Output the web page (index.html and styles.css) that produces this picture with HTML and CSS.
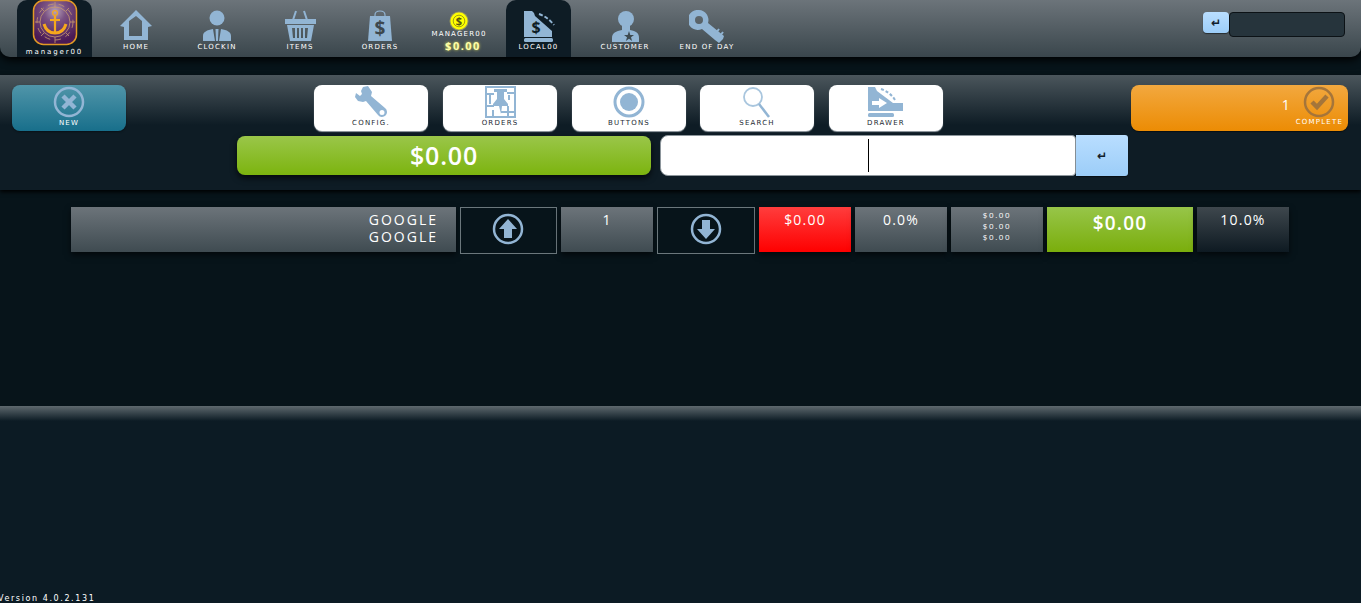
FILE: index.html
```html
<!DOCTYPE html>
<html lang="en">
<head>
    <meta charset="UTF-8">
    <title>POS</title>
    <link rel="stylesheet" href="styles.css">
</head>
<body>

    <!-- Top navigation -->
    <header class="topbar">
        <div class="nav-item tab logo-tab">
            <svg class="logo" width="46" height="46" viewBox="0 0 46 46">
                <defs>
                    <radialGradient id="logoBg" cx="50%" cy="25%" r="70%">
                        <stop offset="0" stop-color="#b8a3b9"/>
                        <stop offset="0.35" stop-color="#7a5283"/>
                        <stop offset="1" stop-color="#4a1a55"/>
                    </radialGradient>
                </defs>
                <rect x="1.500" y="0.500" width="43" height="44" rx="10" fill="url(#logoBg)" stroke="#e39a25" stroke-width="1.500"/>
                <g fill="none" stroke="#c99a70" stroke-width="0.800">
                    <circle cx="23" cy="22" r="15"/>
                    <circle cx="23" cy="22" r="18" stroke-dasharray="6 5"/>
                    <path d="M23 2V8M23 37V43M3 22H8M38 22H43M9 8L12 11M37 8L34 11M9 36L12 33M37 36L34 33"/>
                </g>
                <g fill="none" stroke="#f5a81c" stroke-width="2.200">
                    <circle cx="23" cy="13" r="2.400" stroke-width="1.200"/>
                    <path d="M23 16V33M18 20H28"/>
                    <path d="M12 24C14 31 19 33 23 33C27 33 32 31 34 24" stroke-width="3"/>
                </g>
            </svg>
            <span class="logo-name">manager00</span>
        </div>

        <div class="nav-item nav-home">
            <svg width="32" height="30" viewBox="0 0 32 30"><path fill="#92b5d4" fill-rule="evenodd" d="M16 0L32 16L28 17V30H4V17L0 16L4 12ZM9 11V26H22V11L16 6Z"/></svg>
            <span class="nav-label">HOME</span>
        </div>
        <div class="nav-item nav-clock">
            <svg width="28" height="31" viewBox="0 0 28 31"><circle cx="14" cy="8" r="7.500" fill="#92b5d4"/><path fill="#92b5d4" d="M0 31V26C0 22 4 20 10 19L12 31ZM28 31V26C28 22 24 20 18 19L16 31ZM12.500 19H15.500L15 31H13Z"/></svg>
            <span class="nav-label">CLOCKIN</span>
        </div>
        <div class="nav-item nav-items">
            <svg width="32" height="31" viewBox="0 0 32 31"><path fill="none" stroke="#92b5d4" stroke-width="2" d="M9 10L12 1M23 10L20 1"/><path fill="#92b5d4" d="M1 9H32V14H1Z"/><path fill="#92b5d4" fill-rule="evenodd" d="M3 15H30L27 31H6ZM8 18L9 28H11V18ZM13 18V28H15V18ZM17 18V28H19V18ZM21 18V28H23L24 18Z"/></svg>
            <span class="nav-label">ITEMS</span>
        </div>
        <div class="nav-item nav-orders">
            <svg width="26" height="31" viewBox="0 0 26 31"><path fill="none" stroke="#92b5d4" stroke-width="1.200" d="M8 8V5C8 2 10 1 13 1C16 1 18 2 18 5V8"/><path fill="#92b5d4" d="M3 6H23L25 31H1Z"/><text class="bag-sign" x="13" y="25">$</text></svg>
            <span class="nav-label">ORDERS</span>
        </div>
        <div class="nav-item nav-manager">
            <svg width="20" height="20" viewBox="0 0 20 20"><circle cx="10" cy="10" r="9.500" fill="#9a9a5a"/><circle cx="10" cy="10" r="8.500" fill="#ffff00"/><circle cx="10" cy="10" r="5.800" fill="none" stroke="#77771d" stroke-width="0.700"/><text class="coin-sign" x="10" y="14">$</text></svg>
            <span class="nav-label manager-name">MANAGER00</span>
            <span class="manager-cash">$0.00</span>
        </div>
        <div class="nav-item tab local-tab">
            <svg width="32" height="33" viewBox="0 0 32 33"><path fill="#92b5d4" d="M1 1H9L11 3L12 6L29 21V27H1Z"/><rect x="1" y="28" width="29" height="4" rx="1.500" fill="#92b5d4"/><path fill="none" stroke="#92b5d4" stroke-width="2" stroke-dasharray="4 2" d="M16 4C22 6 27 10 31 15"/><text class="bag-sign dark-sign" x="13" y="23">$</text></svg>
            <span class="nav-label">LOCAL00</span>
        </div>
        <div class="nav-item nav-customer">
            <svg width="27" height="32" viewBox="0 0 27 32"><circle cx="14" cy="9" r="8" fill="#92b5d4"/><path fill="#92b5d4" d="M10 15H18V20C24 21 27 23 27 28V32H0V28C0 23 4 21 10 20Z"/><path fill="#3e4a50" d="M17 21L18.300 25H22L19 27.200L20.100 31L17 28.700L13.900 31L15 27.200L12 25H15.700Z"/></svg>
            <span class="nav-label">CUSTOMER</span>
        </div>
        <div class="nav-item nav-key">
            <svg width="36" height="33" viewBox="0 0 36 33"><path fill="#92b5d4" fill-rule="evenodd" d="M10 0A10 10 0 0 1 19 13L35 26L34 29L30 33L26 30L13 19A10 10 0 1 1 10 0ZM10 6A4 4 0 1 0 10 14A4 4 0 1 0 10 6Z"/><path stroke="#92b5d4" stroke-width="2" d="M27 23L30 19M31 26L34 22"/></svg>
            <span class="nav-label">END OF DAY</span>
        </div>

        <div class="quick-entry">
            <button class="enter-btn small">↵</button>
            <div class="quick-input"></div>
        </div>
    </header>

    <!-- Action panel -->
    <section class="panel">
        <div class="action-row">
            <button class="action-btn new-btn">
                <svg width="32" height="32" viewBox="0 0 32 32"><circle cx="16" cy="16" r="14" fill="none" stroke="#92b5d4" stroke-width="2.500"/><path stroke="#92b5d4" stroke-width="4.500" d="M10 10L22 22M22 10L10 22"/></svg>
                <span class="action-label">NEW</span>
            </button>
            <div class="tools">
                <button class="action-btn tool-btn">
                    <svg width="32" height="32" viewBox="0 0 32 32"><path fill="#92b5d4" fill-rule="evenodd" d="M13 0L8 1L6 5L7 8L5 10L1 7L0 11L3 15L8 16L11 15L23 29A5 5 0 1 0 30 22L16 10L17 6ZM27 24A2.500 2.500 0 1 1 27 29A2.500 2.500 0 1 1 27 24Z"/></svg>
                    <span class="action-label">CONFIG.</span>
                </button>
                <button class="action-btn tool-btn">
                    <svg width="31" height="32" viewBox="0 0 31 32"><rect x="1" y="1" width="29" height="30" fill="none" stroke="#92b5d4" stroke-width="2"/><path fill="none" stroke="#92b5d4" stroke-width="2" d="M1 8H9M22 7H30M5 8V18M2 20H9M23 20V30M16 26H30M8 24V31M24 9V14"/><path fill="#92b5d4" d="M9 3H22V6H19V13L23 18V20H17L16 28L14 20H8V18L12 13V6H9Z"/></svg>
                    <span class="action-label">ORDERS</span>
                </button>
                <button class="action-btn tool-btn">
                    <svg width="32" height="32" viewBox="0 0 32 32"><circle cx="16" cy="16" r="14" fill="none" stroke="#92b5d4" stroke-width="3"/><circle cx="16" cy="16" r="9" fill="#92b5d4"/></svg>
                    <span class="action-label">BUTTONS</span>
                </button>
                <button class="action-btn tool-btn">
                    <svg width="32" height="32" viewBox="0 0 32 32"><circle cx="12" cy="11" r="9" fill="none" stroke="#a9c6de" stroke-width="1.800"/><path stroke="#92b5d4" stroke-width="2.500" d="M18 18L28 31"/></svg>
                    <span class="action-label">SEARCH</span>
                </button>
                <button class="action-btn tool-btn">
                    <svg width="38" height="32" viewBox="0 0 38 32"><path fill="#92b5d4" d="M1 1H8L10 5L26 17H36V25H1Z"/><rect x="1" y="27" width="26" height="4" rx="1.500" fill="#92b5d4"/><path fill="none" stroke="#92b5d4" stroke-width="2" stroke-dasharray="3 2" d="M14 3C20 5 25 9 28 14"/><path fill="#fff" d="M5 15H12V12L20 17L12 22V19H5Z"/></svg>
                    <span class="action-label">DRAWER</span>
                </button>
            </div>
            <button class="action-btn complete-btn">
                <span class="complete-count">1</span>
                <span class="complete-side">
                    <svg width="32" height="32" viewBox="0 0 32 32"><circle cx="16" cy="16" r="14" fill="none" stroke="#a5753a" stroke-width="2.500"/><path fill="none" stroke="#a5753a" stroke-width="4.500" d="M9 16L14 21L24 10"/></svg>
                    <span class="action-label complete-label">COMPLETE</span>
                </span>
            </button>
        </div>
        <div class="amount-row">
            <div class="amount">$0.00</div>
            <div class="amount-input"><span class="caret"></span></div>
            <button class="enter-btn">↵</button>
        </div>
    </section>

    <!-- Order lines -->
    <main class="lines">
        <div class="line">
            <div class="cell name">GOOGLE<br>GOOGLE</div>
            <div class="cell stepper">
                <svg width="32" height="32" viewBox="0 0 32 32"><circle cx="16" cy="16" r="14" fill="none" stroke="#92b5d4" stroke-width="2.500"/><path fill="#92b5d4" d="M16 6L25 16H20V25H12V16H7Z"/></svg>
            </div>
            <div class="cell qty">1</div>
            <div class="cell stepper">
                <svg width="32" height="32" viewBox="0 0 32 32"><circle cx="16" cy="16" r="14" fill="none" stroke="#92b5d4" stroke-width="2.500"/><path fill="#92b5d4" d="M16 26L25 16H20V7H12V16H7Z"/></svg>
            </div>
            <div class="cell price red">$0.00</div>
            <div class="cell price">0.0%</div>
            <div class="cell taxes">$0.00<br>$0.00<br>$0.00</div>
            <div class="cell line-total">$0.00</div>
            <div class="cell price dark">10.0%</div>
        </div>
    </main>

    <footer class="bottom">
        <div class="version">Version 4.0.2.131</div>
    </footer>

</body>
</html>
```

FILE: styles.css
```css
* {
    box-sizing: border-box;
}

body {
    font-family: "Open Sans", sans-serif;
    margin: 0;
    height: 100vh;
    overflow: hidden;
    display: flex;
    flex-direction: column;
    background-color: #07141a;
    color: white;
}

button {
    font-family: inherit;
    border: none;
    padding: 0;
    color: inherit;
}

/* Top navigation */
.topbar {
    height: 57px;
    flex: none;
    display: flex;
    padding-left: 17px;
    background: linear-gradient(#6c747a, #3a464c);
    border-radius: 0 0 10px 10px;
    box-shadow: 0 3px 8px #000;
}

.nav-item {
    display: flex;
    flex-direction: column;
    align-items: center;
    padding: 10px 0 5px;
}

.nav-item svg {
    flex: none;
}

.nav-label {
    font-family: "DejaVu Sans", sans-serif;
    font-size: 7px;
    line-height: 9px;
    margin-top: auto;
    letter-spacing: 1.200px;
    white-space: nowrap;
}

.tab {
    background-color: #0e1c25;
    border-radius: 10px 10px 0 0;
}

.logo-tab {
    width: 75px;
    padding: 0;
}

.logo-name {
    font-family: "DejaVu Sans", sans-serif;
    font-size: 7px;
    line-height: 10px;
    margin-top: auto;
    letter-spacing: 1.900px;
}

.nav-home { width: 88px; }
.nav-clock { width: 74px; }
.nav-items { width: 92px; }
.nav-orders { width: 68px; }
.nav-customer { width: 108px; }
.nav-key { width: 56px; }

.nav-manager {
    width: 90px;
    padding-top: 11px;
}

.local-tab {
    width: 65px;
    margin-left: 2px;
}

.bag-sign {
    font-family: "Open Sans", sans-serif;
    font-size: 19px;
    font-weight: 700;
    text-anchor: middle;
    fill: #3d484e;
}

.dark-sign {
    font-size: 16px;
    fill: #0e1c25;
}

.coin-sign {
    font-family: "Open Sans", sans-serif;
    font-size: 11px;
    font-weight: 700;
    text-anchor: middle;
    fill: #55550f;
}

.manager-name {
    margin-top: -1px;
}

.manager-cash {
    font-size: 11px;
    line-height: 13px;
    font-weight: 700;
    letter-spacing: 1.500px;
    padding-left: 8px;
    color: #ffffa8;
    text-shadow: 0 0 3px #e8e85a;
}

.quick-entry {
    margin-left: auto;
    margin-right: 16px;
    margin-top: 12px;
    display: flex;
    align-items: flex-start;
}

.quick-input {
    width: 116px;
    height: 25px;
    background-color: #26343c;
    border: 1px solid #0c1216;
    border-radius: 4px;
}

.enter-btn {
    width: 52px;
    height: 41px;
    background: linear-gradient(#b9deff, #9ccdf8);
    color: #12202a;
    font-family: "DejaVu Sans", sans-serif;
    font-size: 12px;
    font-weight: 700;
    border-radius: 0 3px 3px 0;
    box-shadow: 0 1px 1px rgba(0, 0, 0, 0.5);
}

.enter-btn.small {
    width: 26px;
    height: 21px;
    border-radius: 4px;
}

/* Action panel */
.panel {
    height: 115px;
    margin-top: 18px;
    flex: none;
    padding-top: 10px;
    background: linear-gradient(#4b565c, #0e1c25 50px);
    box-shadow: 0 2px 4px #000;
}

.action-row {
    display: flex;
    justify-content: space-between;
    padding: 0 13px 0 12px;
}

.tools {
    display: flex;
    gap: 15px;
}

.tools .tool-btn:nth-child(4) {
    margin-left: -1px;
}

.action-btn {
    height: 46px;
    width: 114px;
    border-radius: 8px;
    display: flex;
    flex-direction: column;
    align-items: center;
    padding-top: 1px;
}

.action-label {
    font-family: "DejaVu Sans", sans-serif;
    font-size: 7px;
    line-height: 9px;
    margin-top: 1px;
    letter-spacing: 1.200px;
    white-space: nowrap;
}

.new-btn {
    background: linear-gradient(#5095a9, #186f8b);
    box-shadow: 0 1px 2px rgba(0, 0, 0, 0.4);
}

.tool-btn {
    background-color: white;
    color: #1c2a32;
    box-shadow: 0 1px 1px #9ca4aa;
}

.complete-btn {
    width: 217px;
    background: linear-gradient(#f2a83f, #ec8c04);
    flex-direction: row;
    justify-content: flex-end;
    align-items: flex-start;
    padding-right: 5px;
    box-shadow: 0 1px 1px rgba(0, 0, 0, 0.5);
}

.complete-count {
    font-size: 14px;
    line-height: 19px;
    margin: 9px 6px 0 0;
}

.complete-side {
    display: flex;
    flex-direction: column;
    align-items: center;
}

.complete-label {
    margin-top: 0;
}

.amount-row {
    display: flex;
    align-items: center;
    margin-top: 4px;
    padding-left: 237px;
}

.amount {
    width: 414px;
    height: 39px;
    margin-right: 9px;
    background: linear-gradient(#9ac649, #7cb40f);
    border-radius: 8px;
    font-size: 25px;
    font-weight: 600;
    line-height: 39px;
    letter-spacing: 0.800px;
    text-align: center;
    box-shadow: 0 3px 6px rgba(0, 0, 0, 0.7);
}

.amount-input {
    width: 416px;
    height: 41px;
    background-color: white;
    border: 1px solid #8d969c;
    border-radius: 8px 4px 4px 8px;
    display: flex;
    justify-content: center;
    align-items: center;
}

.caret {
    width: 1px;
    height: 33px;
    background-color: black;
}

/* Order lines */
.lines {
    height: 216px;
    flex: none;
    padding: 17px 0 0 71px;
}

.line {
    display: flex;
    gap: 4px;
    align-items: flex-start;
}

.cell {
    width: 92px;
    height: 45px;
    background: linear-gradient(#6c747a, #3f4b51);
    box-shadow: 0 3px 6px rgba(0, 0, 0, 0.6);
    text-align: center;
    font-size: 14px;
    line-height: 17px;
    padding-top: 4px;
    letter-spacing: 1.200px;
}

.name {
    width: 385px;
    text-align: right;
    padding-right: 18px;
    letter-spacing: 2px;
}

.stepper {
    width: 97px;
    height: 47px;
    background: #07141a;
    border: 1px solid #6b777c;
    box-shadow: none;
    padding: 5px 1px 0 0;
}

.stepper:nth-child(4) {
    width: 98px;
}

.red {
    background: linear-gradient(#ff3d3d, #fe0000);
}

.dark {
    background: linear-gradient(#3e474d, #0e1a22);
}

.taxes {
    font-size: 8px;
    line-height: 11px;
    letter-spacing: 1.600px;
    padding-top: 2px;
}

.line-total {
    width: 146px;
    background: linear-gradient(#97c549, #7aae0c);
    font-size: 19px;
    font-weight: 600;
    line-height: 22px;
    letter-spacing: 1.200px;
    padding-top: 5px;
}

/* Bottom area */
.bottom {
    flex: 1;
    display: flex;
    flex-direction: column;
    justify-content: flex-end;
    background: linear-gradient(#5e696e, #0c1b24 15px);
}

.version {
    font-family: "DejaVu Sans", sans-serif;
    font-size: 8px;
    line-height: 9px;
    letter-spacing: 1.600px;
    margin-left: -2px;
}
```
